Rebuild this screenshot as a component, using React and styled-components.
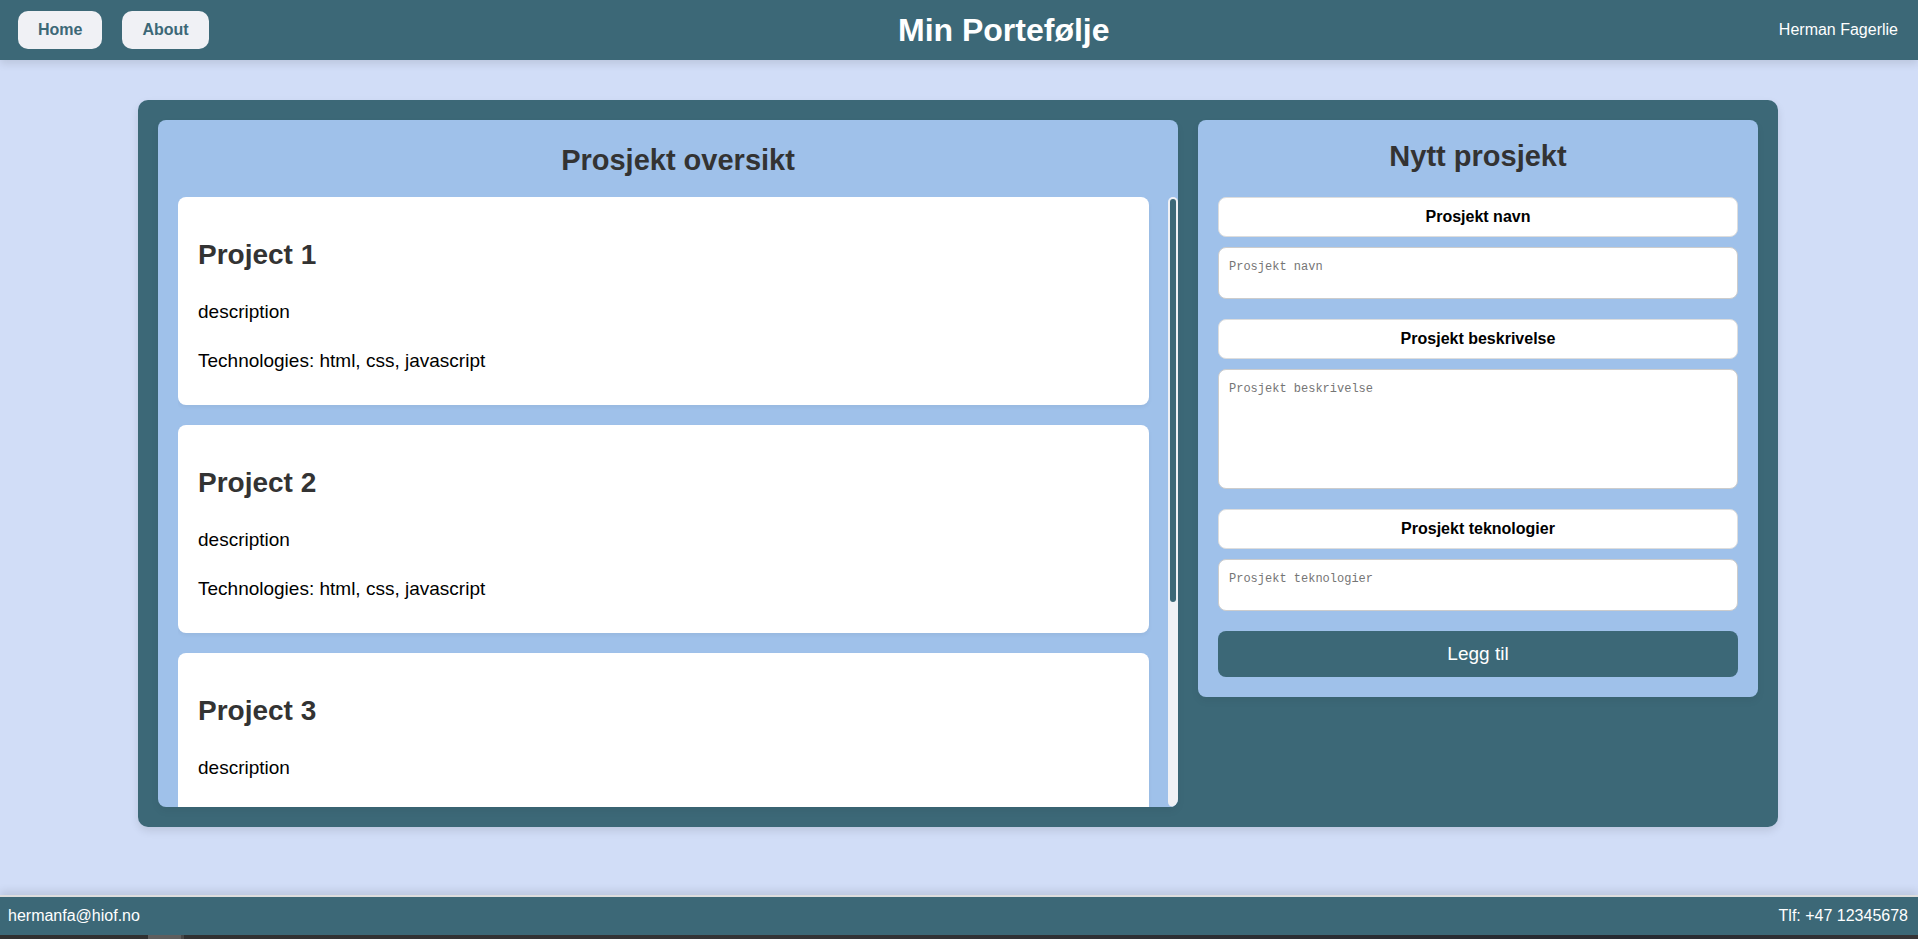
import React, { useState } from "react";
import styled, { createGlobalStyle } from "styled-components";

const teal = "#3c6877";
const sky = "#9fc1ea";
const pale = "#f0f1f5";

const GlobalStyle = createGlobalStyle`
  * { box-sizing: border-box; }
  body {
    margin: 0;
    background: #d1ddf7;
    color: #000;
    font-family: "Liberation Sans", Arial, sans-serif;
    font-size: 16px;
  }
`;

const Page = styled.div`
  display: flex;
  flex-direction: column;
  min-height: 100vh;
`;

const Header = styled.header`
  display: flex;
  align-items: center;
  justify-content: space-between;
  height: 60px;
  padding: 0 20px 0 18px;
  background: ${teal};
  color: #fff;
  box-shadow: 0 4px 8px rgba(0, 0, 0, 0.1);
`;

const Nav = styled.nav`
  display: flex;
  gap: 20px;
  margin-right: 20px;
`;

const NavLink = styled.a`
  padding: 10px 20px;
  border-radius: 10px;
  background: ${pale};
  color: ${teal};
  font-weight: bold;
  line-height: 18px;
  text-decoration: none;
`;

const SiteTitle = styled.h1`
  margin: 0;
  font-size: 32px;
`;

const Main = styled.main`
  flex: 1;
  padding: 40px 20px 40px 18px;
`;

const Board = styled.div`
  display: grid;
  grid-template-columns: 51fr 28fr;
  align-items: start;
  gap: 20px;
  max-width: 1640px;
  margin: 0 auto;
  padding: 20px;
  border-radius: 10px;
  background: ${teal};
  box-shadow: 0 4px 8px rgba(0, 0, 0, 0.1);
`;

const Panel = styled.section`
  border-radius: 8px;
  background: ${sky};
  box-shadow: 0 4px 8px rgba(0, 0, 0, 0.05);
`;

const OverviewPanel = styled(Panel)`
  padding-left: 20px;
  overflow: hidden;
`;

const FormPanel = styled(Panel)`
  padding: 20px;
`;

const Heading = styled.h2`
  margin: 0;
  color: #333;
  font-size: 29px;
  line-height: 32px;
  text-align: center;
`;

const OverviewHeading = styled(Heading)`
  padding: 24px 0 21px;
`;

const FormHeading = styled(Heading)`
  margin-bottom: 25px;
`;

const ListFrame = styled.div`
  display: flex;
  height: 65vh;
`;

const ProjectList = styled.div`
  flex: 1;
  padding-right: 19px;
  overflow-y: auto;
  scrollbar-width: none;
`;

const ScrollTrack = styled.div`
  width: 10px;
  padding: 2px;
  border-radius: 10px;
  background: ${pale};
`;

const ScrollThumb = styled.div`
  position: relative;
  height: 66.5%;
  border-radius: 10px;
  background: ${teal};
`;

const ProjectCard = styled.article`
  margin-bottom: 20px;
  padding: 42px 20px 34px;
  border-radius: 8px;
  background: #fff;
  box-shadow: 0 2px 4px rgba(0, 0, 0, 0.05);
`;

const ProjectName = styled.h3`
  margin: 0 0 31px;
  color: #333;
  font-size: 28px;
  line-height: 32px;
`;

const ProjectText = styled.p`
  margin: 0;
  font-size: 19px;
  line-height: 20px;

  & + & {
    margin-top: 29px;
  }
`;

const Form = styled.form`
  display: flex;
  flex-direction: column;
  gap: 20px;
`;

const Field = styled.div`
  display: flex;
  flex-direction: column;
  gap: 10px;
`;

const FieldLabel = styled.label`
  padding: 10px;
  border: 1px solid #ddd;
  border-radius: 8px;
  background: #fff;
  font-weight: bold;
  line-height: 18px;
  text-align: center;
`;

const TextArea = styled.textarea`
  display: block;
  width: 100%;
  height: ${({ $tall }) => ($tall ? 120 : 52)}px;
  padding: 10px;
  border: 1px solid #ccc;
  border-radius: 8px;
  background: #fff;
  font-family: "Liberation Mono", monospace;
  font-size: 12px;
  line-height: 18px;
  resize: none;

  &::placeholder {
    color: #757575;
  }
`;

const SubmitButton = styled.button`
  padding: 12px;
  border: 0;
  border-radius: 8px;
  background: ${teal};
  color: #fff;
  font-family: inherit;
  font-size: 19px;
  line-height: 22px;
`;

const Footer = styled.footer`
  display: flex;
  justify-content: space-between;
  padding: 10px 10px 10px 8px;
  border-top: 2px solid #ddd;
  background: ${teal};
  color: #fff;
  line-height: 18px;
  box-shadow: 0 -4px 8px rgba(0, 0, 0, 0.1);
`;

const Taskbar = styled.div`
  display: flex;
  height: 4px;
  padding-left: 148px;
  background: linear-gradient(to right, #303030, #343436 40%, #262a31 85%, #363436);
`;

const TaskbarItem = styled.span`
  width: 36px;
  border-right: 3px solid #484848;
  background: #5e5e5e;
`;

const projects = ["Project 1", "Project 2", "Project 3", "Project 4"];

const fields = [
  { id: "navn", label: "Prosjekt navn" },
  { id: "beskrivelse", label: "Prosjekt beskrivelse", tall: true },
  { id: "teknologier", label: "Prosjekt teknologier" },
];

function ScrollingProjects() {
  const [offset, setOffset] = useState(0);

  const handleScroll = ({ currentTarget: list }) => {
    const range = list.scrollHeight - list.clientHeight;
    setOffset(range > 0 ? list.scrollTop / range : 0);
  };

  return (
    <ListFrame>
      <ProjectList onScroll={handleScroll}>
        {projects.map((name) => (
          <ProjectCard key={name}>
            <ProjectName>{name}</ProjectName>
            <ProjectText>description</ProjectText>
            <ProjectText>Technologies: html, css, javascript</ProjectText>
          </ProjectCard>
        ))}
      </ProjectList>
      <ScrollTrack aria-hidden="true">
        <ScrollThumb style={{ top: `${offset * 33.5}%` }} />
      </ScrollTrack>
    </ListFrame>
  );
}

export default function App() {
  return (
    <>
      <GlobalStyle />
      <Page>
        <Header>
          <Nav>
            <NavLink href="#home">Home</NavLink>
            <NavLink href="#about">About</NavLink>
          </Nav>
          <SiteTitle>Min Portefølje</SiteTitle>
          <span>Herman Fagerlie</span>
        </Header>
        <Main>
          <Board>
            <OverviewPanel>
              <OverviewHeading>Prosjekt oversikt</OverviewHeading>
              <ScrollingProjects />
            </OverviewPanel>
            <FormPanel>
              <FormHeading>Nytt prosjekt</FormHeading>
              <Form onSubmit={(event) => event.preventDefault()}>
                {fields.map(({ id, label, tall }) => (
                  <Field key={id}>
                    <FieldLabel htmlFor={id}>{label}</FieldLabel>
                    <TextArea id={id} name={id} placeholder={label} $tall={tall} />
                  </Field>
                ))}
                <SubmitButton type="submit">Legg til</SubmitButton>
              </Form>
            </FormPanel>
          </Board>
        </Main>
        <Footer>
          <span>hermanfa@hiof.no</span>
          <span>Tlf: +47 12345678</span>
        </Footer>
        <Taskbar>
          <TaskbarItem />
        </Taskbar>
      </Page>
    </>
  );
}
